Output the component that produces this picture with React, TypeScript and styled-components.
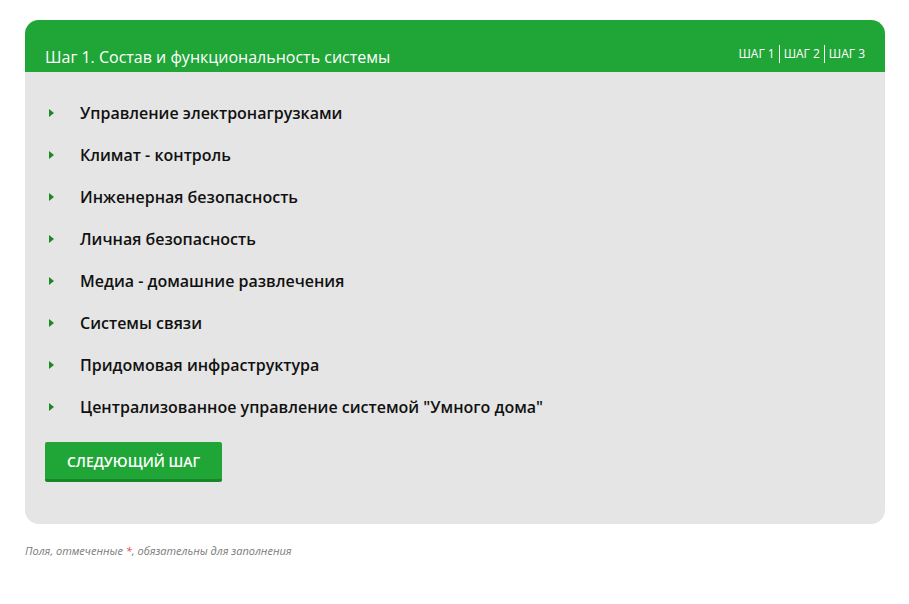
import React from "react";
import styled, { createGlobalStyle } from "styled-components";

const GlobalStyle = createGlobalStyle`
  html, body {
    margin: 0;
    padding: 0;
    background: #ffffff;
    font-family: "Open Sans", "Liberation Sans", sans-serif;
  }
`;

const Page = styled.div`
  padding: 20px 24px 0 25px;
  width: 860px;
`;

const Card = styled.section`
  background: #e5e5e5;
  border-radius: 14px;
  overflow: hidden;
`;

const Header = styled.header`
  display: flex;
  justify-content: space-between;
  align-items: flex-end;
  height: 52px;
  box-sizing: border-box;
  padding: 0 20px 4px 20px;
  background: #1fa637;
  color: #ffffff;
`;

const Title = styled.h2`
  margin: 0;
  font-size: 16px;
  font-weight: 400;
  line-height: 22px;
`;

const Steps = styled.div`
  display: flex;
  align-items: center;
  margin-bottom: 5px;
  font-size: 12px;
  font-weight: 500;
  line-height: 16px;
`;

const Step = styled.span<{ $first?: boolean }>`
  padding: 0 4px;
  border-left: ${({ $first }) => ($first ? "none" : "1px solid #ffffff")};
  line-height: 18px;
  &:last-child {
    padding-right: 0;
  }
`;

const Body = styled.div`
  padding: 20px 20px 42px 20px;
`;

const List = styled.ul`
  list-style: none;
  margin: 0;
  padding: 0;
`;

const Item = styled.li`
  display: flex;
  align-items: center;
  height: 42px;
  font-size: 16px;
  font-weight: 600;
  color: #111111;
`;

const Arrow = styled.span`
  width: 0;
  height: 0;
  margin-left: 4px;
  margin-right: 26px;
  border-top: 4px solid transparent;
  border-bottom: 4px solid transparent;
  border-left: 5px solid #1a8a22;
`;

const NextButton = styled.button`
  margin-top: 14px;
  width: 177px;
  height: 40px;
  border: none;
  border-bottom: 3px solid #17872c;
  border-radius: 2px;
  background: #1fa637;
  color: #ffffff;
  font-family: "Open Sans", "Liberation Sans", sans-serif;
  font-size: 14px;
  font-weight: 600;
  padding-top: 2px;
  cursor: pointer;
`;

const Note = styled.p`
  margin: 19px 0 0 0;
  font-size: 11px;
  font-style: italic;
  color: #7a7a7a;
`;

const Star = styled.span`
  color: #e8403a;
`;

const items = [
  "Управление электронагрузками",
  "Климат - контроль",
  "Инженерная безопасность",
  "Личная безопасность",
  "Медиа - домашние развлечения",
  "Системы связи",
  "Придомовая инфраструктура",
  'Централизованное управление системой "Умного дома"',
];

export default function App() {
  return (
    <>
      <GlobalStyle />
      <Page>
        <Card>
          <Header>
            <Title>Шаг 1. Состав и функциональность системы</Title>
            <Steps>
              <Step $first>ШАГ 1</Step>
              <Step>ШАГ 2</Step>
              <Step>ШАГ 3</Step>
            </Steps>
          </Header>
          <Body>
            <List>
              {items.map((text) => (
                <Item key={text}>
                  <Arrow />
                  {text}
                </Item>
              ))}
            </List>
            <NextButton>СЛЕДУЮЩИЙ ШАГ</NextButton>
          </Body>
        </Card>
        <Note>
          Поля, отмеченные <Star>*</Star>, обязательны для заполнения
        </Note>
      </Page>
    </>
  );
}
